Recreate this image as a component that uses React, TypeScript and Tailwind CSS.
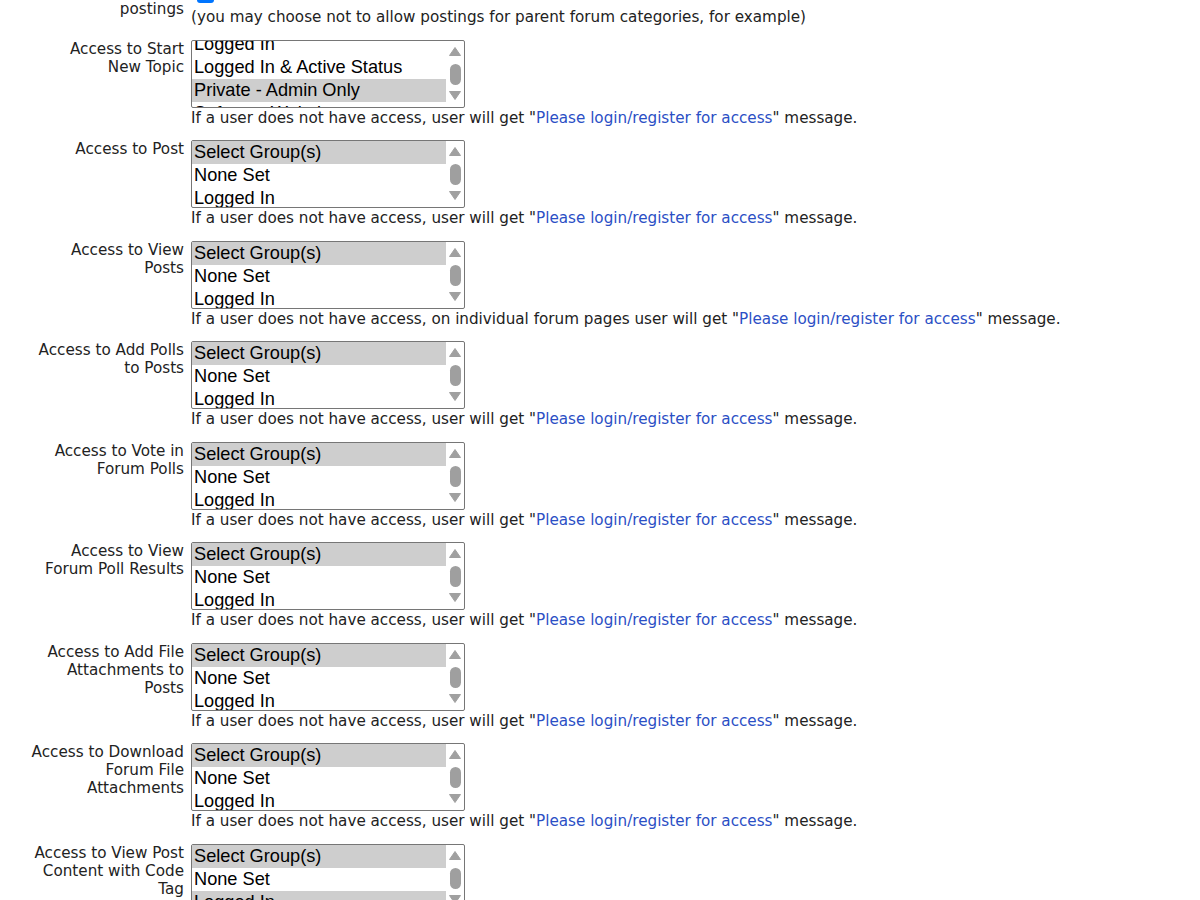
const OPTIONS = [
  "Select Group(s)",
  "None Set",
  "Logged In",
  "Logged In & Active Status",
  "Private - Admin Only",
  "Software Website",
];

type Row = {
  label: string[];
  selected: number[];
  scroll?: number;
  wide?: boolean;
};

const ROWS: Row[] = [
  { label: ["Access to Start", "New Topic"], selected: [4], scroll: 54 },
  { label: ["Access to Post"], selected: [0] },
  { label: ["Access to View", "Posts"], selected: [0], wide: true },
  { label: ["Access to Add Polls", "to Posts"], selected: [0] },
  { label: ["Access to Vote in", "Forum Polls"], selected: [0] },
  { label: ["Access to View", "Forum Poll Results"], selected: [0] },
  { label: ["Access to Add File", "Attachments to", "Posts"], selected: [0] },
  { label: ["Access to Download", "Forum File", "Attachments"], selected: [0] },
  { label: ["Access to View Post", "Content with Code", "Tag"], selected: [0, 2] },
];

function Label({ lines }: { lines: string[] }) {
  return (
    <div className="w-[184px] shrink-0 text-right whitespace-nowrap">
      {lines.map((l) => (
        <div key={l}>{l}</div>
      ))}
    </div>
  );
}

function GroupList({ selected, scroll = 0 }: { selected: number[]; scroll?: number }) {
  return (
    <div className="flex h-[68px] w-[274px] overflow-hidden rounded-[2px] border border-[#767676] bg-white">
      <div className="flex-1 overflow-hidden">
        <div style={{ marginTop: -scroll }} className="font-['Liberation_Sans',Arial,sans-serif] text-[18.2px] text-black">
          {OPTIONS.map((o, i) => (
            <div
              key={o}
              className={`h-[23px] pl-[2px] leading-[23px] whitespace-nowrap ${selected.includes(i) ? "bg-[#cecece]" : ""}`}
            >
              {o}
            </div>
          ))}
        </div>
      </div>
      <div className="flex w-[18px] shrink-0 flex-col items-center pt-[6px]">
        <svg width="12" height="9" viewBox="0 0 12 9">
          <path d="M6 0.5 L11.5 8.5 L0.5 8.5 Z" fill="#a0a0a0" stroke="#a0a0a0" strokeLinejoin="round" />
        </svg>
        <div className="mt-[8px] h-[21px] w-[11px] rounded-full bg-[#9f9f9f]" />
        <svg width="12" height="9" viewBox="0 0 12 9" className="mt-[6px]">
          <path d="M0.5 0.5 L11.5 0.5 L6 8.5 Z" fill="#a0a0a0" stroke="#a0a0a0" strokeLinejoin="round" />
        </svg>
      </div>
    </div>
  );
}

function Help({ wide }: { wide?: boolean }) {
  return (
    <div className="whitespace-nowrap pt-[1px]">
      If a user does not have access, {wide ? "on individual forum pages " : ""}user will get "
      <a className="text-[#2b4fc5]">Please login/register for access</a>" message.
    </div>
  );
}

export default function App() {
  return (
    <div className="h-[900px] w-[1200px] overflow-hidden bg-white font-['DejaVu_Sans',Verdana,sans-serif] text-[15.2px] leading-[18px] text-[#222]">
      <div className="-mt-[18px]">
        <div className="flex">
          <Label lines={["Allow Forum", "postings"]} />
          <div className="ml-[7px]">
            <div className="ml-[6px] mt-[4px] h-[17px] w-[17px] rounded-[3px] bg-[#0075ff]" />
            <div className="mt-[5px] whitespace-nowrap">
              (you may choose not to allow postings for parent forum categories, for example)
            </div>
          </div>
        </div>
        <div className="mt-[13.5px] flex flex-col gap-[13.5px]">
          {ROWS.map((r) => (
            <div key={r.label.join(" ")} className="flex">
              <Label lines={r.label} />
              <div className="ml-[7px]">
                <GroupList selected={r.selected} scroll={r.scroll} />
                <Help wide={r.wide} />
              </div>
            </div>
          ))}
        </div>
      </div>
    </div>
  );
}
